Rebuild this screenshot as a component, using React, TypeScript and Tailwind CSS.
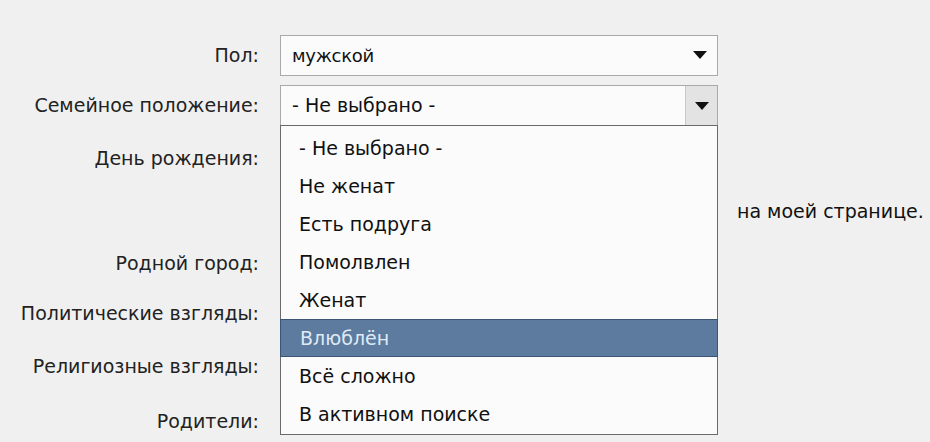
import React from "react";

const font = { fontFamily: '"DejaVu Sans", "Noto Sans", sans-serif' };

function Arrow() {
  return (
    <svg width="14" height="8" viewBox="0 0 14 8">
      <path d="M0 0 H14 L7 8 Z" fill="#111" />
    </svg>
  );
}

const items = [
  "- Не выбрано -",
  "Не женат",
  "Есть подруга",
  "Помолвлен",
  "Женат",
  "Влюблён",
  "Всё сложно",
  "В активном поиске",
];

function Row({ label, h, children }: { label: string; h: string; children?: React.ReactNode }) {
  return (
    <div className={`flex items-center ${h}`}>
      <div className="w-[259px] shrink-0 text-right text-[19px] text-[#222]">{label}</div>
      <div className="ml-[21px] flex-1 relative h-full flex items-center">{children}</div>
    </div>
  );
}

export default function App() {
  return (
    <div className="w-[930px] h-[442px] bg-[#f0f0f0] overflow-hidden relative" style={font}>
      <div className="pt-[30px] flex flex-col">
        <Row label="Пол:" h="h-[50px]">
          <div className="w-[438px] h-[41px] border border-[#a9a9a9] bg-[#fbfbfb] flex items-center justify-between pl-[11px] pr-[10px]">
            <span className="text-[18px] tracking-[-0.3px] text-[#111]">мужской</span>
            <Arrow />
          </div>
        </Row>
        <Row label="Семейное положение:" h="h-[51px]">
          <div className="w-[438px] h-[41px] relative z-10">
            <div className="h-full border border-[#a9a9a9] bg-[#fbfbfb] flex items-center justify-between pl-[11px]">
              <span className="text-[19px] text-[#111]">- Не выбрано -</span>
              <div className="w-[32px] h-full bg-[#e3e3e3] border-l border-[#c8c8c8] flex items-center justify-center">
                <Arrow />
              </div>
            </div>
            <div className="absolute left-0 top-[40px] w-[438px] border border-[#6a6a6a] bg-[#fbfbfb] pt-[3px] pb-[1px]">
              {items.map((it) =>
                it === "Влюблён" ? (
                  <div
                    key={it}
                    className="h-[38px] flex items-center px-[18px] bg-[#5c7b9e] border border-[#3b5674] -mx-px text-[19px] text-[#dfeaf6]"
                  >
                    <span className="pl-px">{it}</span>
                  </div>
                ) : (
                  <div key={it} className="h-[38px] flex items-center px-[18px] text-[19px] text-[#111]">
                    {it}
                  </div>
                )
              )}
            </div>
          </div>
        </Row>
        <Row label="День рождения:" h="h-[54px]" />
        <Row label="" h="h-[53px]">
          <span className="ml-[457px] text-[19px] text-[#111] whitespace-nowrap">на моей странице.</span>
        </Row>
        <Row label="Родной город:" h="h-[50px]" />
        <Row label="Политические взгляды:" h="h-[51px]" />
        <Row label="Религиозные взгляды:" h="h-[54px]" />
        <Row label="Родители:" h="h-[56px]" />
      </div>
    </div>
  );
}
